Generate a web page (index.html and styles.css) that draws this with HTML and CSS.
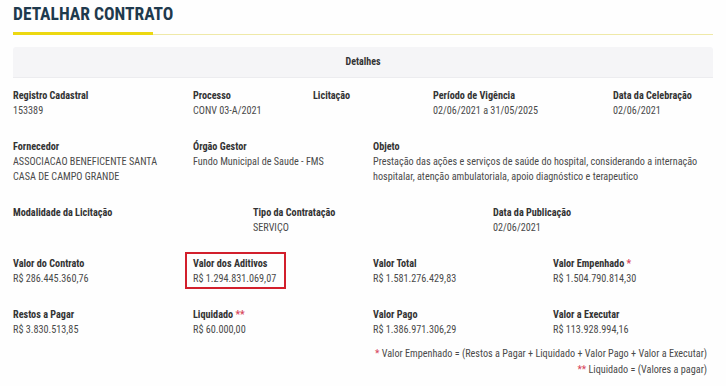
FILE: index.html
```html
<!DOCTYPE html>
<html lang="pt-BR">
<head>
  <meta charset="UTF-8">
  <meta name="viewport" content="width=device-width, initial-scale=1.0">
  <title>Detalhar Contrato</title>
  <link rel="stylesheet" href="styles.css">
</head>
<body>
  <div class="page">
    <h1 class="title">DETALHAR CONTRATO</h1>
    <div class="title-line"><span></span></div>

    <div class="panel-head">Detalhes</div>

    <div class="grid">
      <div class="field span-3"><b>Registro Cadastral</b><p>153389</p></div>
      <div class="field span-2"><b>Processo</b><p>CONV 03-A/2021</p></div>
      <div class="field span-2"><b>Licitação</b><p></p></div>
      <div class="field span-3"><b>Período de Vigência</b><p>02/06/2021 a 31/05/2025</p></div>
      <div class="field span-2"><b>Data da Celebração</b><p>02/06/2021</p></div>

      <div class="field span-3"><b>Fornecedor</b><p>ASSOCIACAO BENEFICENTE SANTA CASA DE CAMPO GRANDE</p></div>
      <div class="field span-3"><b>Órgão Gestor</b><p>Fundo Municipal de Saude - FMS</p></div>
      <div class="field span-6"><b>Objeto</b><p>Prestação das ações e serviços de saúde do hospital, considerando a internação hospitalar, atenção ambulatoriala, apoio diagnóstico e terapeutico</p></div>

      <div class="field span-4"><b>Modalidade da Licitação</b><p></p></div>
      <div class="field span-4"><b>Tipo da Contratação</b><p>SERVIÇO</p></div>
      <div class="field span-4"><b>Data da Publicação</b><p>02/06/2021</p></div>

      <div class="field span-3"><b>Valor do Contrato</b><p>R$ 286.445.360,76</p></div>
      <div class="field span-3"><div class="highlight"><b>Valor dos Aditivos</b><p>R$ 1.294.831.069,07</p></div></div>
      <div class="field span-3"><b>Valor Total</b><p>R$ 1.581.276.429,83</p></div>
      <div class="field span-3"><b>Valor Empenhado <span class="star">*</span></b><p>R$ 1.504.790.814,30</p></div>

      <div class="field span-3"><b>Restos a Pagar</b><p>R$ 3.830.513,85</p></div>
      <div class="field span-3"><b>Liquidado <span class="star">**</span></b><p>R$ 60.000,00</p></div>
      <div class="field span-3"><b>Valor Pago</b><p>R$ 1.386.971.306,29</p></div>
      <div class="field span-3"><b>Valor a Executar</b><p>R$ 113.928.994,16</p></div>
    </div>

    <div class="notes">
      <p><span class="star">*</span> Valor Empenhado = (Restos a Pagar + Liquidado + Valor Pago + Valor a Executar)</p>
      <p><span class="star">**</span> Liquidado = (Valores a pagar)</p>
    </div>
  </div>
</body>
</html>
```

FILE: styles.css
```css
body {
  margin: 0;
  background-color: #fefefe;
  font-family: "Roboto Condensed", Roboto, sans-serif;
  font-stretch: 75%;
  color: #444;
}

.page {
  width: 700px;
  padding: 0 13px;
}

.title {
  margin: 0;
  padding-top: 4px;
  font-size: 17.5px;
  line-height: 20px;
  font-weight: bold;
  color: #1f3a4d;
}

.title-line {
  margin-top: 8px;
  height: 3px;
  display: flex;
  align-items: flex-end;
}

.title-line span {
  display: block;
  width: 140px;
  height: 3px;
  background-color: #ecd811;
}

.title-line::after {
  content: "";
  flex: 1;
  height: 1px;
  background-color: #efe9a8;
}

.panel-head {
  margin-top: 12px;
  height: 30px;
  line-height: 30px;
  text-align: center;
  font-size: 10px;
  font-weight: bold;
  color: #333;
  background-color: #f5f5f7;
  border-radius: 3px 3px 0 0;
  border-bottom: 1px solid #ececef;
}

.grid {
  display: grid;
  grid-template-columns: repeat(12, 40px);
  column-gap: 20px;
  row-gap: 21px;
  margin-top: 10px;
}

.span-2 { grid-column: span 2; }
.span-3 { grid-column: span 3; }
.span-4 { grid-column: span 4; }
.span-6 { grid-column: span 6; }

.field {
  font-size: 10.2px;
  line-height: 15px;
}

.field b {
  display: block;
  color: #333;
  white-space: nowrap;
}

.field p {
  margin: 0;
  color: #4a4a4a;
}

.highlight {
  display: inline-block;
  margin: -4px -10px -3px -8px;
  padding: 2px 8px 1px 6px;
  border: 2px solid #d21f2c;
}

.star {
  color: #d6455c;
}

.notes {
  margin-top: 9px;
  padding-right: 6px;
  text-align: right;
  font-size: 10.2px;
  line-height: 16px;
  color: #4a4a4a;
}

.notes p {
  margin: 0;
}
```
